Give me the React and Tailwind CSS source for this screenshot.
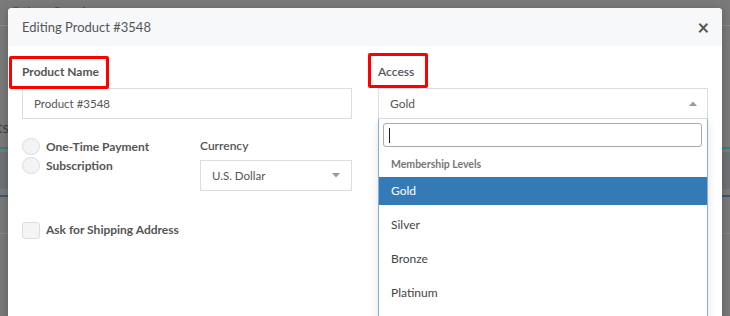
import React from "react";

const CaretDown = () => (
  <svg width="8" height="5" viewBox="0 0 8 5" className="shrink-0">
    <path d="M0 0 L8 0 L4 4.5 Z" fill="#9a9a9a" />
  </svg>
);

const CaretUp = () => (
  <svg width="8" height="5" viewBox="0 0 8 5" className="shrink-0">
    <path d="M0 5 L8 5 L4 0.5 Z" fill="#9a9a9a" />
  </svg>
);

// red annotation box drawn around a label
const Marked = ({ children, box }) => (
  <span className="relative flex">
    <span className={`absolute border-[3px] border-[#ff0000] rounded-[2px] ${box}`}></span>
    {children}
  </span>
);

const Background = () => (
  <div className="flex flex-col h-[316px] bg-[#7a7a7a]">
    <div className="h-[25px] pl-[10px] pt-[5px] text-[15px] text-[#4e4e4e] leading-none">
      Other Service
    </div>
    <div className="h-[1px] bg-[#8c8c8c]"></div>
    <div className="h-[94px]"></div>
    <div className="h-[14px] flex items-center">
      <div className="w-[9px] flex justify-end">
        <span className="text-[15px] text-[#3f3f3f] leading-none whitespace-nowrap">Products</span>
      </div>
    </div>
    <div className="h-[13px]"></div>
    <div className="h-[2px] bg-[#2f8186]"></div>
    <div className="h-[3px]"></div>
    <div className="h-[37px] bg-[#6e7277]"></div>
    <div className="h-[6px]"></div>
    <div className="h-[2px] bg-[#3b5874]"></div>
    <div className="h-[36px]"></div>
    <div className="h-[1px] bg-[#868686]"></div>
  </div>
);

export default function App() {
  const options = ["Gold", "Silver", "Bronze", "Platinum"];

  return (
    <div
      className="relative w-[730px] h-[316px] overflow-hidden text-[#555]"
      style={{ fontFamily: "Lato, 'Open Sans', sans-serif" }}
    >
      <Background />

      {/* modal */}
      <div className="absolute left-[8px] top-[8px] w-[714px] h-[330px] bg-white rounded-[4px] shadow-[0_2px_10px_rgba(0,0,0,0.25)]">
        <div className="h-[38px] bg-[#f7f8fa] rounded-t-[4px] flex items-center justify-between pl-[14px] pr-[13px]">
          <span className="text-[13px] text-[#555] mt-[2px]">Editing Product #3548</span>
          <span className="text-[20px] font-bold text-[#555] leading-none">×</span>
        </div>

        <div className="grid grid-cols-[330px_330px] gap-x-[26px] px-[14px] pt-[18px]">
          {/* left column */}
          <div className="flex flex-col">
            <div className="h-[24px] flex items-start leading-[16px]">
              <Marked box="-left-[13px] -right-[10px] -top-[8px] -bottom-[9px]">
                <span className="text-[12px] font-bold leading-[16px]">Product Name</span>
              </Marked>
            </div>
            <div className="h-[31px] border border-[#ddd] flex items-center pl-[11px] text-[11.5px] text-[#555]">
              Product #3548
            </div>

            <div className="flex mt-[19px]">
              <div className="w-[178px] flex flex-col gap-[2px]">
                <label className="flex items-center gap-[6px] h-[17px]">
                  <span className="w-[18px] h-[17px] rounded-full border border-[#ddd] bg-[#f3f3f3]"></span>
                  <span className="text-[12px] font-bold text-[#555]">One-Time Payment</span>
                </label>
                <label className="flex items-center gap-[6px] h-[17px]">
                  <span className="w-[18px] h-[17px] rounded-full border border-[#ddd] bg-[#f3f3f3]"></span>
                  <span className="text-[12px] font-bold text-[#555]">Subscription</span>
                </label>
              </div>
              <div className="flex flex-col w-[152px] -mt-[2px]">
                <span className="text-[12px] font-semibold text-[#555] h-[20px] leading-[20px]">Currency</span>
                <div className="mt-[4px] h-[31px] border border-[#ddd] flex items-center justify-between pl-[11px] pr-[11px] text-[11.5px] text-[#555]">
                  U.S. Dollar
                  <CaretDown />
                </div>
              </div>
            </div>

            <label className="flex items-center gap-[6px] mt-[30px]">
              <span className="w-[18px] h-[17px] rounded-[3px] border border-[#ddd] bg-[#f4f4f4]"></span>
              <span className="text-[12px] font-bold text-[#555]">Ask for Shipping Address</span>
            </label>
          </div>

          {/* right column */}
          <div className="flex flex-col">
            <div className="h-[24px] flex items-start leading-[16px]">
              <Marked box="-left-[10px] -right-[14px] -top-[11px] -bottom-[8px]">
                <span className="text-[12px] font-semibold leading-[16px]">Access</span>
              </Marked>
            </div>
            <div className="relative">
              <div className="h-[31px] border border-[#ddd] flex items-center justify-between pl-[11px] pr-[10px] text-[12px] text-[#555]">
                Gold
                <CaretUp />
              </div>
              <div className="absolute left-0 right-0 top-[31px] h-[220px] bg-white border border-t-0 border-[#7fb2e0] shadow-[0_4px_8px_rgba(0,0,0,0.12)]">
                <div className="pt-[4px] pl-[4px] pr-[5px]">
                  <div className="h-[24px] border border-[#aaa] rounded-[3px] flex items-center pl-[5px]">
                    <span className="w-[1px] h-[15px] bg-[#222]"></span>
                  </div>
                </div>
                <div className="h-[30px] flex items-center pl-[12px] pt-[6px] text-[10.5px] font-bold text-[#777]">
                  Membership Levels
                </div>
                <div className="flex flex-col gap-[6px]">
                  {options.map((o, i) => (
                    <div
                      key={o}
                      className={`h-[28px] flex items-center pl-[12px] text-[12px] ${
                        i === 0 ? "bg-[#337ab7] text-white" : "text-[#444]"
                      }`}
                    >
                      {o}
                    </div>
                  ))}
                </div>
              </div>
            </div>
          </div>
        </div>
      </div>
    </div>
  );
}
